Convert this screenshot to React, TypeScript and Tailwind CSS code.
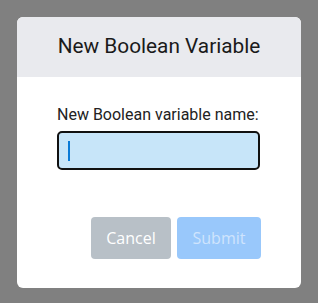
import React from "react";

export default function App() {
  return (
    <div className="w-[318px] h-[303px] bg-[#808080] pt-[17px] pl-[17px]">
      <div className="w-[284px] h-[271px] bg-white rounded-[6px] overflow-hidden flex flex-col">
        <div className="h-[60px] bg-[#e9eaee] flex items-center justify-center">
          <span className="text-[20.8px] text-[#1a1a1a]" style={{ fontFamily: "Roboto, sans-serif" }}>
            New Boolean Variable
          </span>
        </div>
        <div className="flex flex-col pl-[40px] pr-[40px]">
          <label className="mt-[28px] text-[16px] leading-[20px] text-[#222]" style={{ fontFamily: "Roboto, sans-serif" }}>
            New Boolean variable name:
          </label>
          <div className="mt-[6px] w-[203px] h-[39px] rounded-[5px] border-2 border-[#111] bg-[#c7e5f9] flex items-center pl-[9px]">
            <div className="w-[2px] h-[20px] bg-[#0a7ad6]" />
          </div>
          <div className="mt-[47px] flex justify-end gap-[6px]" style={{ fontFamily: "'Open Sans', sans-serif" }}>
            <button className="w-[80px] h-[42px] rounded-[4px] bg-[#b8c0c7] text-white text-[16px]">Cancel</button>
            <button className="w-[84px] h-[42px] rounded-[4px] bg-[#99c8fb] text-[#cfe4fd] text-[16px]">Submit</button>
          </div>
        </div>
      </div>
    </div>
  );
}
